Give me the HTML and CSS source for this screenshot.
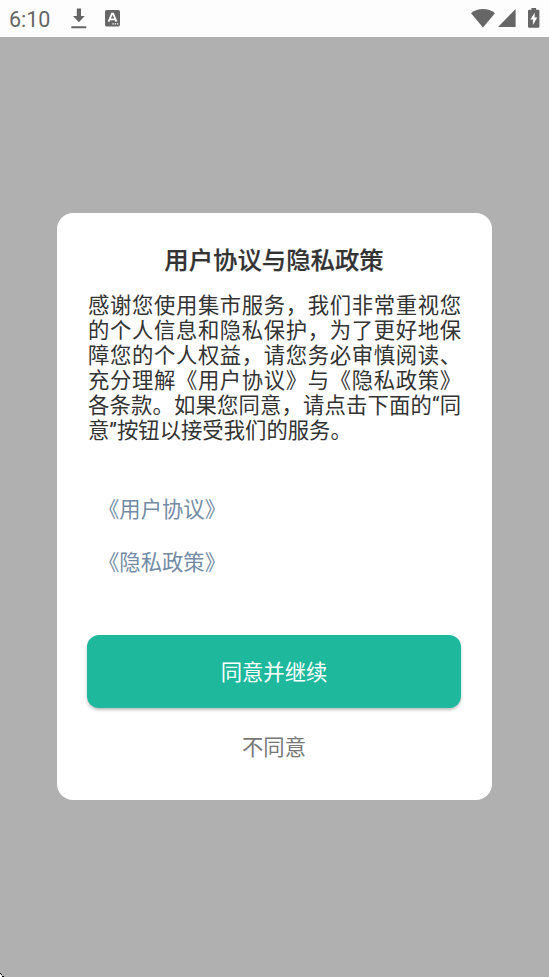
FILE: index.html
```html
<!DOCTYPE html>
<html lang="zh-CN">
<head>
<meta charset="utf-8">
<title>用户协议与隐私政策</title>
<link rel="stylesheet" href="styles.css">
</head>
<body>
<header class="status">
  <span class="clock">6:10</span>
  <svg class="download" width="16" height="20" viewBox="0 0 16 20"><path d="M5.8 0.500h4.200v7.500h3.800L7.900 14.300 2 8h3.800zM.3 18.200h15v2H.3z"/></svg>
  <svg class="app" width="15" height="17" viewBox="0 0 15 17"><rect width="15" height="16.5" rx="1.8"/><path class="mark" d="M3.6 11.6L7 3.6h1.1l3.4 8M5 9.3h5"/><path class="dots" d="M7.4 13.2h1.3v1.4H7.4zM9.7 13.2H11v1.4H9.7zM12 13.2h1.3v1.4H12z"/></svg>
  <div class="system">
    <svg width="24" height="19" viewBox="0 0 24 19"><path d="M0 4.2Q5.3 0 12 0t12 4.2L12 18.4z"/></svg>
    <svg class="signal" width="18" height="18" viewBox="0 0 18 18"><path d="M17.6 0v18H0z"/></svg>
    <svg class="battery" width="12" height="20" viewBox="0 0 12 20"><path d="M3.4 0h4.7v1.8h2q1.3 0 1.3 1.3v15.3q0 1.3-1.3 1.3H1.3Q0 19.7 0 18.4V3.1q0-1.3 1.3-1.3h2.1z"/><path class="bolt" d="M6.7 4.8v4.6h2.6L4.900 17v-5.600H2.300z"/></svg>
  </div>
</header>
<main class="backdrop">
  <section class="dialog">
    <h1>用户协议与隐私政策</h1>
    <p class="message">
      <span>感谢您使用集市服务，我们非常重视您</span>
      <span>的个人信息和隐私保护，为了更好地保</span>
      <span>障您的个人权益，请您务必审慎阅读、</span>
      <span>充分理解《用户协议》与《隐私政策》</span>
      <span>各条款。如果您同意，请点击下面的“同</span>
      <span class="last">意”按钮以接受我们的服务。</span>
    </p>
    <nav class="links">
      <a>《用户协议》</a>
      <a>《隐私政策》</a>
    </nav>
    <button class="agree">同意并继续</button>
    <button class="decline">不同意</button>
  </section>
  <svg class="corner" width="4" height="4" viewBox="0 0 4 4"><path class="tip" d="M0 1l3 3H0z"/><path d="M0 0h1v1H0zM1 1h1v1H1zM2 3h2v1H2z"/></svg>
</main>
</body>
</html>
```

FILE: styles.css
```css
* { box-sizing: border-box; }

body {
  margin: 0;
  height: 977px;
  display: flex;
  flex-direction: column;
  overflow: hidden;
  font-family: Roboto, "Noto Sans CJK SC", sans-serif;
  color: #333;
  text-spacing-trim: space-all;
}

svg { display: block; overflow: visible; }

.status {
  flex: none;
  height: 37px;
  display: flex;
  align-items: flex-start;
  padding: 8px 9px 0;
  background: #fdfdfd;
  fill: #666;
}

.clock {
  width: 62px;
  font-size: 21.5px;
  line-height: 23px;
  color: #666;
}

.app { margin: 2px 0 0 18px; }
.mark { fill: none; stroke: #fff; stroke-width: 1.8; }
.dots { fill: #fff; }

.system { display: flex; margin: 1px 0 0 auto; }
.signal { margin: 0 0 0 3px; }
.battery { margin: -1px 0 0 12px; }
.bolt { fill: #fff; }

.backdrop {
  position: relative;
  flex: 1;
  padding: 176px 57px 0;
  background: #b0b0b0;
}

.dialog {
  width: 434.5px;
  height: 587px;
  padding: 30px 30.5px 0 30px;
  border-radius: 16px;
  background: #fff;
  display: flex;
  flex-direction: column;
}

h1 {
  margin: 0;
  font-size: 24.4px;
  line-height: 36px;
  font-weight: 500;
  text-align: center;
  -webkit-text-stroke: 0.2px #333;
}

.message {
  margin: 14px 0 0 1px;
  font-size: 21.35px;
  line-height: 25px;
}

.message span {
  display: block;
  white-space: nowrap;
  text-align: justify;
  text-align-last: justify;
}

.message .last { text-align-last: left; }

.links {
  display: flex;
  flex-direction: column;
  gap: 23px;
  margin: 52px 0 0 11px;
  font-size: 21.35px;
  line-height: 30px;
  color: #738ba5;
}

button {
  border: 0;
  padding: 0;
  font: inherit;
  font-size: 21.35px;
}

.agree {
  height: 73px;
  flex: none;
  margin-top: 57px;
  padding-bottom: 2px;
  border-radius: 12px;
  background: #1eb99d;
  box-shadow: 0 2px 3px rgba(0, 0, 0, 0.25);
  color: #fff;
}

.decline {
  height: 40px;
  margin-top: 17px;
  background: none;
  color: #777;
}

.corner { position: absolute; left: 0; bottom: 0; }
.tip { fill: #fff; }
```
